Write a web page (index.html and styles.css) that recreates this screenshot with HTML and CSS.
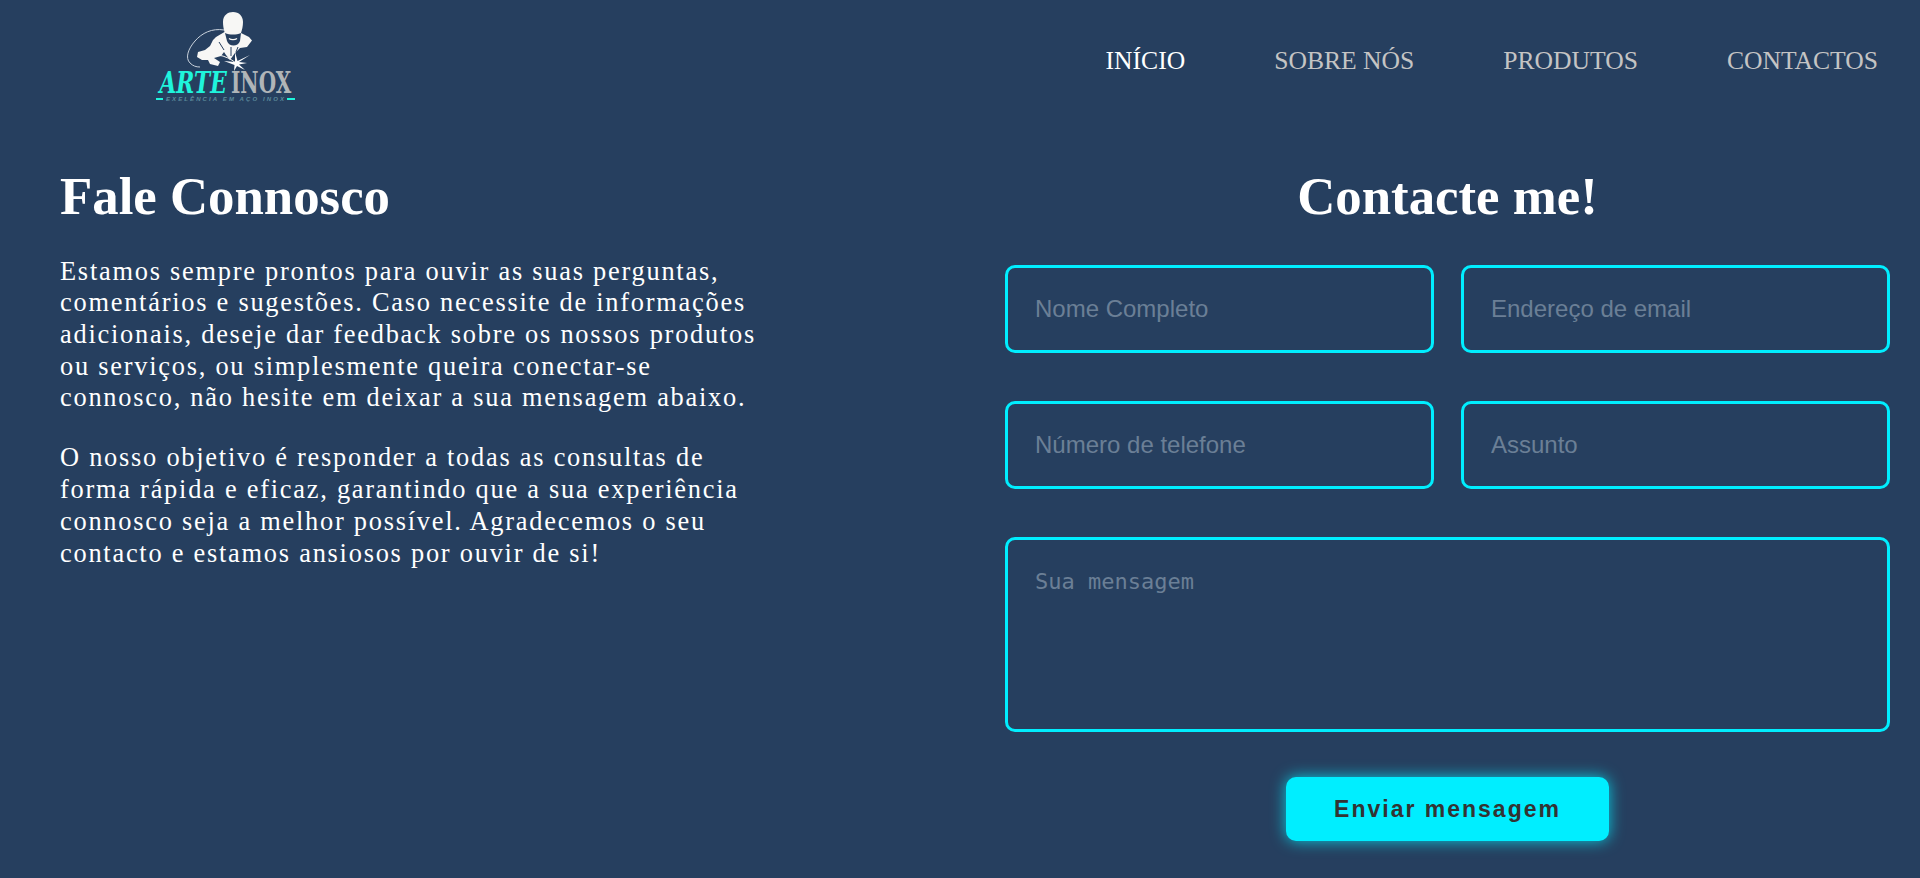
FILE: index.html
```html
<!DOCTYPE html>
<html lang="pt">
<head>
<meta charset="utf-8">
<title>Arte Inox - Contactos</title>
<link rel="stylesheet" href="styles.css">
</head>
<body>
<header class="topbar">
  <a class="logo" href="#">
    <svg class="logo-art" viewBox="0 0 170 115" width="170" height="115" role="img" aria-label="Arte Inox">
      <path class="logo-hose" d="M84 30C72 28 62 33 55 41C48 49 45 58 50 63C53 66 56 67 60 67"/>
      <path class="logo-body" d="M83 22C83 15 88 12 93 12C99 12 103 16 103 22C103 26 102 30 101 33L109 37L112 40.500L107 47L100 48L95 53L90 60L86 55L84 52L81 56L74 58L80 62L78 66L70 64L68 60L62 60L57 57L58 52L65 50L70 46L73 40L76 37L84.500 32C83.500 29 83 25 83 22Z"/>
      <path class="logo-visor" d="M85 33C90 35 96 35 101 33L100 41C98 47 89 47 87 41Z"/>
      <path class="logo-chin" d="M89 38.500C91 40 95 40 97 38.500"/>
      <path class="logo-crease" d="M79 42L84 50M91 47L91 56M98 47L96 52"/>
      <path class="logo-torch" d="M78 55C85 56 91 59 96 63"/>
      <path class="logo-spark" d="M110 55L99 62L107 63L99 64.500L105 70L97 66L94 71L94.500 65L84 61L95 62L95 52L97.500 61Z"/>
      <text class="logo-arte" transform="translate(19.500 93) scale(.75 1)">ARTE</text>
      <text class="logo-inox" transform="translate(91 93) scale(.69 1)">INOX</text>
      <path class="logo-rule" d="M16 99H23M147 99H155"/>
      <text class="logo-tag" x="26" y="101">EXELÊNCIA EM AÇO INOX</text>
    </svg>
  </a>
  <nav class="nav">
    <a class="nav-link is-active" href="#">INÍCIO</a>
    <a class="nav-link" href="#">SOBRE NÓS</a>
    <a class="nav-link" href="#">PRODUTOS</a>
    <a class="nav-link" href="#">CONTACTOS</a>
  </nav>
</header>
<main class="content">
  <section class="intro">
    <h1 class="title">Fale Connosco</h1>
    <p class="intro-text">Estamos sempre prontos para ouvir as suas perguntas, comentários e sugestões. Caso necessite de informações adicionais, deseje dar feedback sobre os nossos produtos ou serviços, ou simplesmente queira conectar-se connosco, não hesite em deixar a sua mensagem abaixo.</p>
    <p class="intro-text">O nosso objetivo é responder a todas as consultas de forma rápida e eficaz, garantindo que a sua experiência connosco seja a melhor possível. Agradecemos o seu contacto e estamos ansiosos por ouvir de si!</p>
  </section>
  <section class="contact">
    <h2 class="title title-center">Contacte me!</h2>
    <form class="form">
      <input class="field" type="text" placeholder="Nome Completo">
      <input class="field" type="email" placeholder="Endereço de email">
      <input class="field" type="tel" placeholder="Número de telefone">
      <input class="field" type="text" placeholder="Assunto">
      <textarea class="field field-area" placeholder="Sua mensagem"></textarea>
      <button class="send" type="button">Enviar mensagem</button>
    </form>
  </section>
</main>
</body>
</html>
```
FILE: styles.css
```css
* { box-sizing: border-box; }
html, body { height: 100%; }
body {
  margin: 0;
  background: #263f5f;
  color: #fff;
  font-family: "Liberation Serif", "Times New Roman", serif;
  overflow: hidden;
}
.topbar {
  display: flex;
  justify-content: space-between;
  height: 120px;
  padding: 0 42px 0 140px;
}
.logo {
  display: block;
  width: 170px;
  height: 115px;
}
.logo-art { display: block; }
.logo-hose { fill: none; stroke: #c9d2dc; stroke-width: 1; }
.logo-body { fill: #f7f7f5; }
.logo-visor { fill: #263f5f; }
.logo-chin { fill: none; stroke: #f7f7f5; stroke-width: 1.4; }
.logo-crease { fill: none; stroke: #263f5f; stroke-width: 1; }
.logo-torch { fill: none; stroke: #f7f7f5; stroke-width: 1; }
.logo-spark { fill: #fff; }
.logo-arte {
  fill: #1ff5dc;
  font: italic 700 29px "DejaVu Serif", serif;
}
.logo-inox {
  fill: #b0b5b8;
  font: 700 29px "DejaVu Serif", serif;
}
.logo-rule { fill: none; stroke: #1ff5dc; stroke-width: 2; }
.logo-tag {
  fill: #5c8a9b;
  font: italic 700 6px "Liberation Sans", sans-serif;
  letter-spacing: 2.1px;
}
.nav { display: flex; gap: 89px; padding-top: 46px; }
.nav-link {
  color: #c4c4c4;
  font-size: 25.6px;
  line-height: 30px;
  text-decoration: none;
}
.nav-link.is-active { color: #fff; }
.content {
  display: flex;
  justify-content: space-between;
  padding: 44px 30px 0 60px;
}
.intro { width: 705px; }
.title {
  margin: 0;
  font-size: 52.8px;
  line-height: 64px;
  font-weight: 700;
}
.title-center { text-align: center; }
.intro-text {
  margin: 0 0 28.500px;
  font-size: 26.4px;
  line-height: 31.68px;
  letter-spacing: 1.75px;
}
.title + .intro-text { margin-top: 27.500px; }
.contact { width: 885px; }
.form {
  display: grid;
  grid-template-columns: 1fr 1fr;
  column-gap: 27px;
  row-gap: 48px;
  margin-top: 37px;
}
.field {
  display: block;
  width: 100%;
  height: 88px;
  padding: 0 27px;
  background: transparent;
  border: 3px solid #00eeff;
  border-radius: 10px;
  color: #fff;
  font-family: "Liberation Sans", Arial, sans-serif;
  font-size: 24px;
  outline: none;
}
.field::placeholder { color: #6b7f96; opacity: 1; }
.field-area {
  grid-column: 1 / -1;
  height: 195px;
  padding: 29px 27px 27px;
  resize: none;
  font-family: "DejaVu Sans Mono", monospace;
  font-size: 22px;
}
.send {
  grid-column: 1 / -1;
  justify-self: center;
  width: 323px;
  height: 64px;
  margin-top: -3px;
  background: #00eeff;
  border: 0;
  border-radius: 10px;
  box-shadow: 0 0 15px rgba(0, 238, 255, .8);
  color: #333;
  font: 700 23px "Liberation Sans", Arial, sans-serif;
  letter-spacing: 2px;
}
```
